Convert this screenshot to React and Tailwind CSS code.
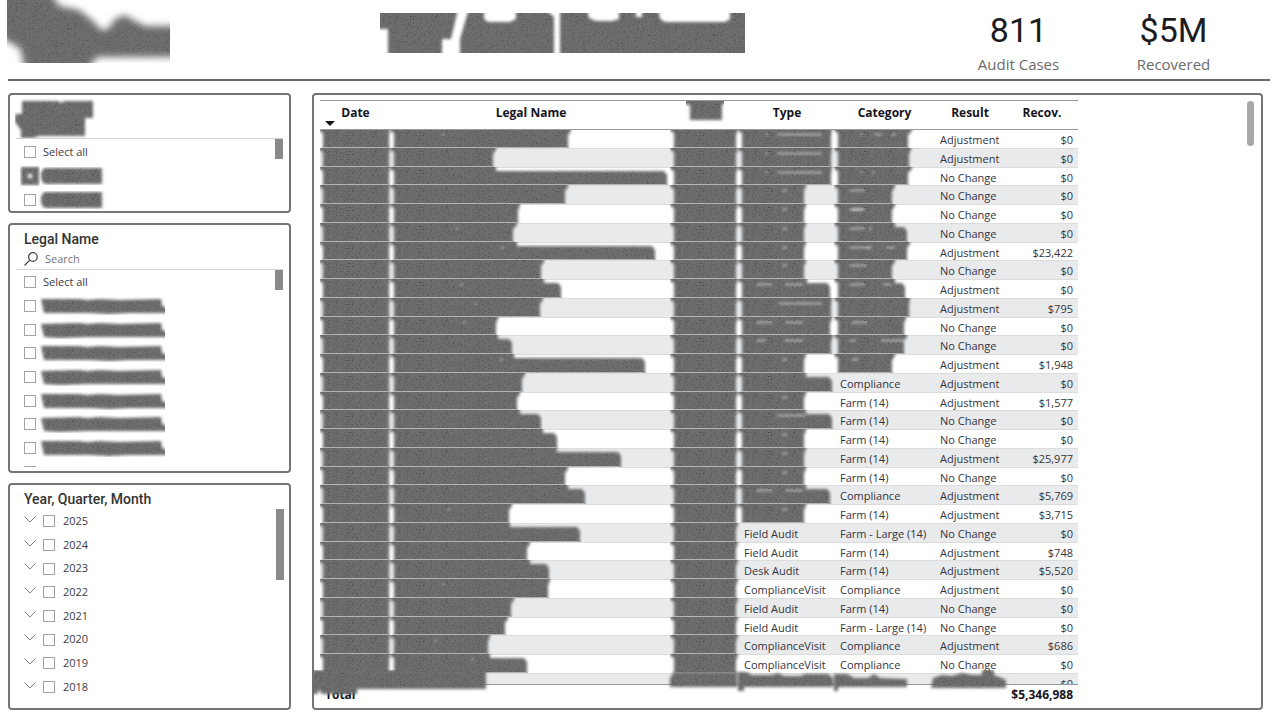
import React from 'react'

const GRID = 'grid grid-cols-[71px_280px_68px_96px_99px_72px_72px]'

// Each mark is [top edge, body edge, ...light streaks as [from, to]]
const NAMES = [
  [181, 178, [52, 55]], [106, 103], [106, 277], [178, 175], [130, 128], [127, 123, [66, 69]],
  [127, 265, [111, 114]], [154, 151], [154, 171, [70, 73]], [153, 150, [84, 87]], [108, 106, [73, 76]],
  [108, 122], [124, 255, [110, 113]], [135, 132], [130, 127], [130, 151], [153, 167], [167, 231],
  [178, 175], [178, 195], [122, 119, [57, 60]], [120, 190], [140, 137], [140, 159], [160, 158, [52, 55]],
  [124, 121], [118, 115], [100, 98, [44, 47]], [100, 137, [81, 84]],
]

const WIDE = [94, 93, [39, 84], [27, 30]]
const DOT = [68, 66, [44, 49]]
const PAIR = [94, 92, [18, 35], [47, 65]]

const TYPES = [
  WIDE, WIDE, WIDE, DOT, DOT, DOT, DOT, DOT, [69, 92, [18, 35], [47, 65]], [94, 93, [40, 84]], PAIR,
  [95, 93, [18, 28], [46, 65]], DOT, [68, 94], DOT, [68, 94, [39, 68]], DOT, DOT, DOT,
  [68, 92, [18, 35], [47, 65]], DOT, 'Field Audit', 'Field Audit', 'Desk Audit', 'ComplianceVisit',
  'Field Audit', 'Field Audit', 'ComplianceVisit', 'ComplianceVisit',
]

const CATEGORIES = [
  [78, 74, [26, 29], [40, 48], [57, 62]], [77, 75], [78, 74, [26, 29], [38, 41]], [61, 58, [15, 31]],
  [61, 58, [15, 31], [17, 29]], [61, 73, [15, 31], [34, 38]], [76, 73, [15, 36], [33, 38], [52, 61]],
  [61, 58, [15, 33]], [61, 71, [15, 31], [49, 58]], [76, 75], [72, 70, [17, 34]],
  [73, 70, [15, 22], [47, 73]], [61, 58, [17, 25]], 'Compliance', 'Farm (14)', 'Farm (14)', 'Farm (14)',
  'Farm (14)', 'Farm (14)', 'Compliance', 'Farm (14)', 'Farm - Large (14)', 'Farm (14)', 'Farm (14)',
  'Compliance', 'Farm (14)', 'Farm - Large (14)', 'Compliance', 'Compliance',
]

const A = 'Adjustment'
const N = 'No Change'
const RESULTS = [A, A, N, N, N, N, A, N, A, A, N, N, A, A, A, N, N, A, N, A, A, N, A, A, A, N, N, A, N]
const RECOVERED = [
  '$0', '$0', '$0', '$0', '$0', '$0', '$23,422', '$0', '$0', '$795', '$0', '$0', '$1,948', '$0', '$1,577',
  '$0', '$0', '$25,977', '$0', '$5,769', '$3,715', '$0', '$748', '$5,520', '$0', '$0', '$0', '$686', '$0',
]

const TONES = '0.2 0.25 0.32 0.4 0.43 0.44 0.44 0.44 0.44'

function Filters() {
  return (
    <svg width="0" height="0" className="absolute" aria-hidden="true">
      <defs>
        {[['grain', 1.5], ['grain-soft', 3.5]].map(([id, blur]) => (
          <filter key={id} id={id} filterUnits="userSpaceOnUse" x="-20" y="-20" width="760" height="120" colorInterpolationFilters="sRGB">
            <feTurbulence type="fractalNoise" baseFrequency="1.37" numOctaves="1" seed="4" result="n" />
            <feColorMatrix in="n" type="matrix" values="1 0 0 0 0  1 0 0 0 0  1 0 0 0 0  0 0 0 0 1" />
            <feComponentTransfer result="g">
              <feFuncR type="table" tableValues={TONES} />
              <feFuncG type="table" tableValues={TONES} />
              <feFuncB type="table" tableValues={TONES} />
            </feComponentTransfer>
            <feGaussianBlur in="SourceAlpha" stdDeviation={blur} result="b" />
            <feComposite in="g" in2="b" operator="in" />
          </filter>
        ))}
        <filter id="haze" x="-50%" y="-200%" width="200%" height="500%">
          <feGaussianBlur stdDeviation="1.2" />
        </filter>
      </defs>
    </svg>
  )
}

function Smudge({ w, h, d, soft, className = '', children }) {
  return (
    <svg width={w} height={h} viewBox={`0 0 ${w} ${h}`} className={`block shrink-0 ${className}`} aria-hidden="true">
      <path d={d} filter={soft ? 'url(#grain-soft)' : 'url(#grain)'} />
      {children}
    </svg>
  )
}

function CellMark({ mark, short }) {
  const [t, b, ...streaks] = mark
  const h = short ? 17 : 18
  const d =
    b > t
      ? `M0 -6H${t}V4H${b - 3}L${b} 8V24H4V4L0 2Z`
      : `M0 -6H${t}V2L${b} 6V24H4V4L0 2Z`
  return (
    <Smudge w={Math.max(t, b) + 2} h={h + 1} d={d} className="-mt-px -ml-px">
      {streaks.map(([from, to]) => (
        <rect key={from} x={from} y="4" width={to - from} height="3" rx="1.5" fill="#fff" opacity="0.3" filter="url(#haze)" />
      ))}
      <rect x="4" y={h} width={b - 5} height="1" fill="#b4b4b4" />
    </Smudge>
  )
}

function Cell({ value, short }) {
  return Array.isArray(value) ? (
    <td><CellMark mark={value} short={short} /></td>
  ) : (
    <td className="px-[5px] whitespace-nowrap">{value}</td>
  )
}

function Check({ className = '', ...props }) {
  return <input type="checkbox" className={`size-3 shrink-0 appearance-none border border-[#a3a3a3] bg-white checked:bg-[#6a6a6a] ${className}`} {...props} />
}

function Panel({ className = '', children, ...props }) {
  return (
    <section className={`rounded-[4px] border-2 border-[#757575] bg-white ${className}`} {...props}>
      {children}
    </section>
  )
}

function Kpi({ value, label }) {
  return (
    <div className="flex w-[155px] flex-col items-center">
      <div className="font-[Roboto,sans-serif] text-[34px] leading-8 text-[#1b1b22]">{value}</div>
      <div className="mt-1.5 text-[15px] leading-6 text-[#6b6b6b]">{label}</div>
    </div>
  )
}

const ITEM = 'flex h-6 items-center gap-[7px] pl-2 nth-[3n]:h-[23px]'

function NameMark({ index }) {
  const wobble = index % 2
  return (
    <Smudge
      w={126}
      h={18}
      className="-ml-1"
      d={`M2 ${2 + wobble}L40 2L48 3L62 2L80 3L122 2L123 9L132 12V16L90 16L70 ${17 - wobble}L50 16L20 ${16 + wobble}L5 16Z`}
    />
  )
}

function Header() {
  return (
    <header className="mr-[10px] ml-2 flex h-[81px] items-start border-b-2 border-[#6b6b6b]">
      <Smudge w={163} h={63} soft className="-ml-px" d="M-10 -10H43L52 6L72 10L86 21L94 30L101 29L108 19L118 15L128 21L138 26H175V57H90L80 70H18L13 48L-10 36Z" />
      <div className="flex flex-1 justify-center pl-[13px]">
        <Smudge w={365} h={40} className="mt-[13px]" d="M-8 -8H79L71 26H62V48H8V16H-8ZM80 48V26L90 -8H104V6L108 9H130L136 6V-8H160L174 4V48H180V-8H206L209 5L216 8H232L239 6V-8H256V4H262V-8H278L280 6L285 9H345L350 6V-8H375V48Z">
          <path d="M177 6V46" stroke="#b0b0b0" strokeWidth="4" opacity="0.7" filter="url(#haze)" />
        </Smudge>
      </div>
      <div className="flex pt-[14px] pr-[19px]">
        <Kpi value="811" label="Audit Cases" />
        <Kpi value="$5M" label="Recovered" />
      </div>
    </header>
  )
}

function Thumb({ className }) {
  return <div className={`absolute w-2 bg-[#8a8a8a] ${className}`} />
}

const TITLE = 'font-[Roboto,sans-serif] text-sm leading-5 font-medium text-[#333]'

function Slicers() {
  return (
    <aside className="flex w-[283px] shrink-0 flex-col gap-[10px] text-[11px] text-[#3b3b46]">
      <Panel className="h-[120px] pt-px pl-1.5" aria-label="Period">
        <Smudge w={84} h={42} d="M7 5H43L46 7L49 5H78V22H70V40H24L18 42H6V34L0 26V18H7Z" className="-ml-px" />
        <div className="relative mr-1.5 border-t border-[#d4d4d4] pt-px">
          <label className={ITEM}><Check /><span>Select all</span></label>
          <div className={ITEM}>
            <Smudge w={20} h={20} className="-mr-1 -ml-1" d="M1 1H19V19H1ZM8 8V12H12V8Z" />
            <Smudge w={66} h={18} className="-ml-1" d="M5 1H63V17H5L2 12V6Z" />
          </div>
          <div className={ITEM}>
            <Check aria-label="Second period" />
            <Smudge w={66} h={18} className="-ml-1" d="M5 1H63V17H5L2 12V6Z" />
          </div>
          <Thumb className="top-0 right-0 h-5" />
        </div>
      </Panel>

      <Panel className="flex h-[250px] flex-col pt-1 pl-1.5" aria-label="Legal Name">
        <h2 className={`pl-2 ${TITLE}`}>Legal Name</h2>
        <div className="flex h-5 items-center gap-[7px] pl-2">
          <svg width="14" height="14" viewBox="0 0 14 14" fill="none" stroke="#444" strokeWidth="1.2" className="shrink-0">
            <circle cx="8.9" cy="5" r="4.3" />
            <path d="M5.9 8.1L0.5 13.5" />
          </svg>
          <input type="search" placeholder="Search" aria-label="Search legal name" className="w-full bg-transparent outline-none placeholder:text-[#767676]" />
        </div>
        <div className="relative mr-1.5 mb-1 min-h-0 flex-1 overflow-hidden border-t border-[#d4d4d4]">
          <label className={ITEM}><Check /><span>Select all</span></label>
          {[0, 1, 2, 3, 4, 5, 6].map((i) => (
            <div key={i} className={ITEM}>
              <Check aria-label={`Legal name ${i + 1}`} />
              <NameMark index={i} />
            </div>
          ))}
          <div className={ITEM}><Check aria-label="Legal name 8" /></div>
          <Thumb className="top-0 right-0 h-5" />
        </div>
      </Panel>

      <Panel className="relative flex-1 px-1.5 pt-1" aria-label="Year, Quarter, Month">
        <h2 className={`pl-2 ${TITLE}`}>Year, Quarter, Month</h2>
        <ul>
          {[2025, 2024, 2023, 2022, 2021, 2020, 2019, 2018].map((y) => (
            <li key={y} className={ITEM}>
              <button type="button" aria-label={`Expand ${y}`} className="mb-1">
                <svg width="12" height="7" viewBox="0 0 12 7" fill="none" stroke="#808080" className="block"><path d="M0.5 0.5L6 6L11.5 0.5" /></svg>
              </button>
              <label className="flex items-center gap-2"><Check className="border-[#8a8a8a]" /><span>{y}</span></label>
            </li>
          ))}
        </ul>
        <Thumb className="top-6 right-[5px] h-[71px]" />
      </Panel>
    </aside>
  )
}

function Cases() {
  return (
    <Panel className="relative min-w-0 flex-1 pt-[5px] pl-1.5" aria-label="Audit cases">
      <table className="flex h-full w-[758px] flex-col text-[11px] leading-[19px] text-[#33333d]">
        <thead className="block">
          <tr className={`${GRID} h-[30px] border-y border-[#999] pt-[3px] text-xs leading-[18px] text-[#15151d]`}>
            <th className="relative">
              Date
              <svg width="10" height="5" className="absolute bottom-[3px] left-[5px]"><path d="M0 0H10L5 5Z" fill="#15151d" /></svg>
            </th>
            <th>Legal Name</th>
            <th aria-label="Identifier"><Smudge w={38} h={22} d="M-4 -8H42V3H36V19H4V4L-4 3Z" className="mx-auto -mt-[3px]" /></th>
            <th>Type</th>
            <th>Category</th>
            <th>Result</th>
            <th>Recov.</th>
          </tr>
        </thead>
        <tbody className="block min-h-0 flex-1 overflow-hidden">
          {RESULTS.map((result, i) => {
            const short = i % 4 === 2
            return (
              <tr key={i} className={`${GRID} h-[19px] border-b border-[#dcdcdc] even:bg-[#e9eaec] nth-[4n+3]:h-[18px]`}>
                <Cell value={[71, 70]} short={short} />
                <Cell value={NAMES[i]} short={short} />
                <Cell value={[68, 66]} short={short} />
                <Cell value={TYPES[i]} short={short} />
                <Cell value={CATEGORIES[i]} short={short} />
                <td className="pl-[6px] whitespace-nowrap">{result}</td>
                <td className="pr-[5px] text-right">{RECOVERED[i]}</td>
              </tr>
            )
          })}
          <tr className="flex h-[19px] justify-end bg-[#e9eaec] pr-[5px]"><td>$0</td></tr>
        </tbody>
        <tfoot className="block">
          <tr className="flex h-6 justify-between border-t border-[#999] px-[5px] text-xs leading-5 font-bold text-[#15151d]">
            <td>Total</td>
            <td>$5,346,988</td>
          </tr>
        </tfoot>
      </table>
      <div className="absolute top-1.5 right-[7px] h-[45px] w-[7px] rounded-full bg-[#a8a8a8]" />
      <svg width="700" height="26" viewBox="0 0 700 26" className="absolute bottom-3 -left-0.5" aria-hidden="true">
        <g filter="url(#grain)">
          <path d="M0 0H174V19H45V24H10L6 19V24H0Z" />
          <path d="M362 2H425V17H358V8Z" />
          <path d="M426 2H434L440 5H460L466 3L472 6H488L493 4H516L521 8V17H432V21H426Z" />
          <path d="M522 4H535L542 8H556L562 4L568 8L595 9V17H526V21H522Z" />
          <path d="M621 8L630 5L640 6L650 3L660 5H670V0H682V5L694 10V18H619Z" />
        </g>
      </svg>
    </Panel>
  )
}

export default function App() {
  return (
    <div className="flex h-screen flex-col overflow-hidden bg-white font-['Open_Sans','Noto_Sans',sans-serif]">
      <Filters />
      <Header />
      <main className="mt-3 mr-[17px] mb-[10px] ml-2 flex min-h-0 flex-1 gap-[21px]">
        <Slicers />
        <Cases />
      </main>
    </div>
  )
}
